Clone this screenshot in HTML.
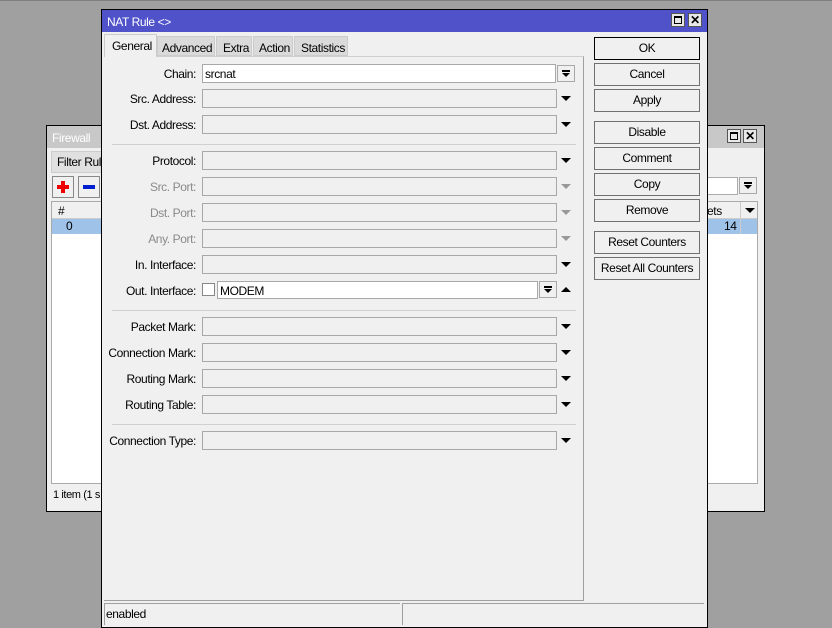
<!DOCTYPE html><html><head><style>
*{box-sizing:border-box;margin:0;padding:0}
body{width:832px;height:628px;background:#a0a0a0;position:relative;overflow:hidden;font-family:"Liberation Sans",sans-serif;font-size:12px;color:#000;letter-spacing:-0.4px}
.a{position:absolute}
.lbl{position:absolute;text-align:right;width:190px;left:6px;font-size:12px}
.dis{color:#8a8a8a}
.in{position:absolute;left:202px;width:355px;height:19px;border:1px solid #a8a8a8;background:#f0f0f0}
.arr{position:absolute;left:561px;width:0;height:0;border-left:5px solid transparent;border-right:5px solid transparent;border-top:5px solid #000}
.arr.g{border-top-color:#999}
.btn{position:absolute;left:594px;width:106px;height:23px;border:1px solid #707070;background:#f0f0f0;text-align:center;line-height:21px;font-size:12px}
.sep{position:absolute;left:112px;width:464px;height:1px;background:#d0d0d0}
.dd{position:absolute;width:18px;height:17px;border:1px solid #a8a8a8;background:#f0f0f0}
.dd:before{content:"";position:absolute;left:4px;top:4px;width:8px;height:2px;background:#000}
.dd:after{content:"";position:absolute;left:4px;top:7px;border-left:4px solid transparent;border-right:4px solid transparent;border-top:4px solid #000}
.x{font-size:12px;line-height:12px;text-align:center;font-weight:bold}
</style></head><body>
<div class="a" style="left:0;top:0;width:832px;height:1px;background:#808080"></div>
<!-- firewall window -->
<div class="a" style="left:46px;top:125px;width:719px;height:387px;background:#f0f0f0;border:1px solid #000"></div>
<div class="a" style="left:47px;top:126px;width:717px;height:22px;background:#c8c8c8"></div>
<div class="a" style="left:52px;top:131px;color:#fff;font-size:12px">Firewall</div>
<div class="a" style="left:727px;top:129px;width:14px;height:14px;border:1px solid #555;background:#e8e8e8"><div style="margin:2px;width:8px;height:8px;border:1px solid #000;border-top-width:2px"></div></div>
<div class="a x" style="left:743px;top:129px;width:14px;height:14px;border:1px solid #555;background:#e8e8e8">✕</div>
<div class="a" style="left:51px;top:151px;width:60px;height:22px;background:#e0e0e0;border:1px solid #ccc"></div>
<div class="a" style="left:57px;top:155px">Filter Rule</div>
<div class="a" style="left:52px;top:176px;width:22px;height:22px;border:1px solid #888;background:#f0f0f0"><div style="position:absolute;left:4px;top:8px;width:12px;height:4px;background:#e00"></div><div style="position:absolute;left:8px;top:4px;width:4px;height:12px;background:#e00"></div></div>
<div class="a" style="left:78px;top:176px;width:22px;height:22px;border:1px solid #888;background:#f0f0f0"><div style="margin:8px 4px;width:12px;height:4px;background:#0020d0"></div></div>
<div class="a" style="left:51px;top:201px;width:707px;height:283px;background:#fff;border:1px solid #aaa"></div>
<div class="a" style="left:52px;top:202px;width:705px;height:17px;background:#f0f0f0;border-bottom:1px solid #ccc"></div>
<div class="a" style="left:58px;top:204px">#</div>
<div class="a" style="left:52px;top:219px;width:705px;height:15px;background:#9fc3e8"></div>
<div class="a" style="left:66px;top:219px">0</div>
<div class="a" style="left:724px;top:219px">14</div>
<div class="a" style="left:707px;top:204px">ets</div>
<div class="a" style="left:740px;top:202px;width:1px;height:32px;background:#ccc"></div>
<div class="a" style="left:745px;top:208px;border-left:5px solid transparent;border-right:5px solid transparent;border-top:5px solid #000"></div>
<div class="a" style="left:707px;top:177px;width:31px;height:18px;background:#fff;border:1px solid #aaa"></div>
<div class="dd" style="left:739px;top:177px"></div>
<div class="a" style="left:53px;top:489px;font-size:11px">1 item (1 s</div>
<!-- NAT window -->
<div class="a" style="left:101px;top:9px;width:607px;height:619px;background:#f0f0f0;border:1px solid #000"></div>
<div class="a" style="left:102px;top:10px;width:605px;height:22px;background:#4f52c9"></div>
<div class="a" style="left:107px;top:15px;color:#fff;font-size:12px">NAT Rule &lt;&gt;</div>
<div class="a" style="left:671px;top:13px;width:14px;height:14px;border:1px solid #555;background:#e8e8e8"><div style="margin:2px;width:8px;height:8px;border:1px solid #000;border-top-width:2px"></div></div>
<div class="a x" style="left:688px;top:13px;width:14px;height:14px;border:1px solid #555;background:#e8e8e8">✕</div>
<!-- tabs -->
<div class="a" style="left:104px;top:56px;width:480px;height:545px;border-right:1px solid #a0a0a0;border-bottom:1px solid #a0a0a0;border-top:1px solid #d0d0d0"></div>
<div class="a" style="left:157px;top:36px;width:58px;height:20px;background:#dadada;border:1px solid #ccc;padding:4px 0 0 4px">Advanced</div>
<div class="a" style="left:216px;top:36px;width:36px;height:20px;background:#dadada;border:1px solid #ccc;padding:4px 0 0 6px">Extra</div>
<div class="a" style="left:253px;top:36px;width:40px;height:20px;background:#dadada;border:1px solid #ccc;padding:4px 0 0 5px">Action</div>
<div class="a" style="left:294px;top:36px;width:54px;height:20px;background:#dadada;border:1px solid #ccc;padding:4px 0 0 6px">Statistics</div>
<div class="a" style="left:104px;top:34px;width:53px;height:23px;background:#f0f0f0;border:1px solid #ccc;border-bottom:none;padding:4px 0 0 7px">General</div>
<!-- fields -->
<div class="lbl" style="top:67px">Chain:</div>
<div class="a" style="left:202px;top:64px;width:354px;height:19px;border:1px solid #a8a8a8;background:#fff;padding:2px 0 0 2px">srcnat</div>
<div class="dd" style="left:557px;top:65px;height:17px"></div>
<div class="lbl" style="top:92px">Src. Address:</div><div class="in" style="top:89px"></div><div class="arr" style="top:96px"></div>
<div class="lbl" style="top:118px">Dst. Address:</div><div class="in" style="top:115px"></div><div class="arr" style="top:122px"></div>
<div class="sep" style="top:144px"></div>
<div class="lbl" style="top:154px">Protocol:</div><div class="in" style="top:151px"></div><div class="arr" style="top:158px"></div>
<div class="lbl dis" style="top:180px">Src. Port:</div><div class="in" style="top:177px"></div><div class="arr g" style="top:184px"></div>
<div class="lbl dis" style="top:206px">Dst. Port:</div><div class="in" style="top:203px"></div><div class="arr g" style="top:210px"></div>
<div class="lbl dis" style="top:232px">Any. Port:</div><div class="in" style="top:229px"></div><div class="arr g" style="top:236px"></div>
<div class="lbl" style="top:258px">In. Interface:</div><div class="in" style="top:255px"></div><div class="arr" style="top:262px"></div>
<div class="lbl" style="top:284px">Out. Interface:</div>
<div class="a" style="left:202px;top:283px;width:13px;height:13px;border:1px solid #888;background:#fff"></div>
<div class="a" style="left:217px;top:281px;width:321px;height:18px;border:1px solid #a8a8a8;background:#fff;padding:2px 0 0 2px">MODEM</div>
<div class="dd" style="left:539px;top:281px"></div>
<div class="a" style="left:561px;top:287px;border-left:5px solid transparent;border-right:5px solid transparent;border-bottom:5px solid #000"></div>
<div class="sep" style="top:310px"></div>
<div class="lbl" style="top:320px">Packet Mark:</div><div class="in" style="top:317px"></div><div class="arr" style="top:324px"></div>
<div class="lbl" style="top:346px">Connection Mark:</div><div class="in" style="top:343px"></div><div class="arr" style="top:350px"></div>
<div class="lbl" style="top:372px">Routing Mark:</div><div class="in" style="top:369px"></div><div class="arr" style="top:376px"></div>
<div class="lbl" style="top:398px">Routing Table:</div><div class="in" style="top:395px"></div><div class="arr" style="top:402px"></div>
<div class="sep" style="top:424px"></div>
<div class="lbl" style="top:434px">Connection Type:</div><div class="in" style="top:431px"></div><div class="arr" style="top:438px"></div>
<!-- buttons -->
<div class="btn" style="top:37px;border-color:#000">OK</div>
<div class="btn" style="top:63px">Cancel</div>
<div class="btn" style="top:89px">Apply</div>
<div class="btn" style="top:121px">Disable</div>
<div class="btn" style="top:147px">Comment</div>
<div class="btn" style="top:173px">Copy</div>
<div class="btn" style="top:199px">Remove</div>
<div class="btn" style="top:231px">Reset Counters</div>
<div class="btn" style="top:257px">Reset All Counters</div>
<!-- status -->
<div class="a" style="left:104px;top:603px;width:296px;height:22px;border-top:1px solid #a0a0a0;border-left:1px solid #a0a0a0;padding:3px 0 0 1px">enabled</div>
<div class="a" style="left:402px;top:603px;width:302px;height:22px;border-top:1px solid #a0a0a0;border-left:1px solid #a0a0a0"></div>
</body></html>
